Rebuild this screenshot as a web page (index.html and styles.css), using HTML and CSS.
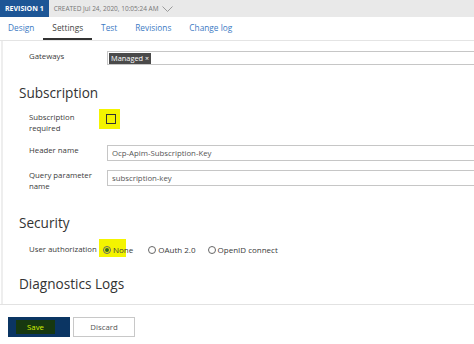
FILE: index.html
```html
<!DOCTYPE html>
<html lang="en">
<head>
    <meta charset="UTF-8">
    <title>API Settings</title>
    <link rel="stylesheet" href="styles.css">
</head>
<body>
    <div class="topbar">
        <span class="revision">REVISION 1</span>
        <span class="created">CREATED Jul 24, 2020, 10:05:24 AM</span>
        <svg class="chevron" width="11" height="6" viewBox="0 0 11 6"><path d="M0.5 0.5 L5.5 5.5 L10.5 0.5" fill="none" stroke="#9a9a9a" stroke-width="1"/></svg>
    </div>

    <div class="tabs">
        <a href="#" class="tab">Design</a>
        <a href="#" class="tab active">Settings</a>
        <a href="#" class="tab">Test</a>
        <a href="#" class="tab">Revisions</a>
        <a href="#" class="tab">Change log</a>
    </div>

    <div class="content">
        <div class="row">
            <label class="field-label">Gateways</label>
            <div class="input tags">
                <span class="tag">Managed <span class="tag-x">&times;</span></span>
            </div>
        </div>

        <h2>Subscription</h2>

        <div class="row check-row">
            <label class="field-label">Subscription<br>required</label>
            <span class="check-hl"><span class="checkbox"></span></span>
        </div>

        <div class="row">
            <label class="field-label">Header name</label>
            <div class="input">Ocp-Apim-Subscription-Key</div>
        </div>

        <div class="row">
            <label class="field-label">Query parameter<br>name</label>
            <div class="input">subscription-key</div>
        </div>

        <h2 class="security">Security</h2>

        <div class="row radios">
            <label class="field-label">User authorization</label>
            <label class="radio first"><span class="radio-hl"></span><span class="dot checked"></span>None</label>
            <label class="radio"><span class="dot"></span>OAuth 2.0</label>
            <label class="radio"><span class="dot"></span>OpenID connect</label>
        </div>

        <h2 class="diag">Diagnostics Logs</h2>
    </div>

    <div class="footer">
        <button class="btn save"><span class="save-hl">Save</span></button>
        <button class="btn discard">Discard</button>
    </div>
</body>
</html>
```

FILE: styles.css
```css
body {
    margin: 0;
    font-family: 'Open Sans', 'Noto Sans', sans-serif;
    color: #333;
    background: #fff;
    width: 474px;
    overflow: hidden;
}

.topbar {
    display: flex;
    align-items: center;
    height: 17px;
    background: #e9e9e9;
}

.revision {
    background: #1d5696;
    color: #fff;
    font-size: 7px;
    font-weight: 700;
    height: 17px;
    line-height: 17px;
    padding: 0 5px 0 5px;
}

.created {
    color: #777;
    font-size: 6.5px;
    margin-left: 5px;
}

.chevron {
    margin-left: 3px;
}

.tabs {
    display: flex;
    height: 23px;
    border-bottom: 1px solid #e4e4e4;
    padding-left: 8px;
}

.tab {
    font-size: 8.3px;
    color: #3c7ac4;
    text-decoration: none;
    line-height: 21px;
    border-bottom: 2px solid transparent;
    margin-right: 18px;
}

.tab.active {
    color: #444;
    border-bottom-color: #333;
    padding: 0 9px;
    margin-left: -9px;
    margin-right: 9px;
}

.content {
    border-left: 2px solid #eee;
    margin-left: 1px;
    padding-top: 10px;
    height: 253px;
}

.row {
    display: flex;
    align-items: flex-start;
    padding-left: 26px;
    margin-bottom: 9px;
}

.field-label {
    width: 78px;
    flex: none;
    font-size: 7.8px;
    line-height: 11px;
    color: #3a3a3a;
}

.input {
    flex: 1;
    height: 14px;
    border: 1px solid #c6c6c6;
    border-right: none;
    font-size: 7.8px;
    line-height: 14px;
    color: #555;
    padding-left: 4px;
}

.tags {
    height: 12px;
    line-height: 12px;
    padding-left: 1px;
    display: flex;
    align-items: center;
}

.tag {
    background: #4a4a4a;
    color: #fff;
    font-size: 7.4px;
    line-height: 10px;
    padding: 0 2px;
}

.tag-x {
    font-size: 7px;
}

h2 {
    font-size: 13.6px;
    line-height: 20px;
    font-weight: 400;
    color: #333;
    margin: 18px 0 9px 16px;
}

.check-row {
    margin-bottom: 11px;
}

.check-hl {
    display: inline-block;
    background: #f4f400;
    padding: 5px 4px 5px 7px;
    margin-left: -8px;
    margin-top: -3px;
}

.checkbox {
    display: block;
    width: 8px;
    height: 8px;
    border: 1px solid #333;
}

h2.security {
    margin-top: 21px;
    margin-bottom: 11px;
}

.radios {
    align-items: center;
}

.radio {
    position: relative;
    display: flex;
    align-items: center;
    font-size: 8px;
    color: #3a3a3a;
    margin-right: 12px;
}

.radio.first {
    margin-left: -4px;
    margin-right: 15px;
}

.radio-hl {
    position: absolute;
    left: -4px;
    top: -5px;
    width: 27px;
    height: 18px;
    background: #f4f400;
    z-index: -1;
}

.dot {
    display: inline-block;
    width: 6px;
    height: 6px;
    border: 1px solid #666;
    border-radius: 50%;
    margin-right: 2px;
    box-sizing: content-box;
    position: relative;
}

.dot.checked::after {
    content: '';
    position: absolute;
    left: 1px;
    top: 1px;
    width: 4px;
    height: 4px;
    border-radius: 50%;
    background: #2e6b1e;
}

h2.diag {
    margin-top: 19px;
}

.footer {
    border-top: 1px solid #e2e2e2;
    padding: 12px 0 0 8px;
    display: flex;
    gap: 3px;
}

.btn {
    width: 62px;
    height: 20px;
    font-family: inherit;
    font-size: 7.8px;
    padding: 0;
    cursor: pointer;
}

.save {
    background: #0b3563;
    border: none;
    display: flex;
    align-items: center;
    padding-left: 8px;
}

.save-hl {
    display: block;
    width: 39px;
    height: 14px;
    line-height: 14px;
    background: #173810;
    color: #d4f000;
    text-align: center;
}

.discard {
    background: #fff;
    border: 1px solid #c8c8c8;
    color: #555;
}
```
